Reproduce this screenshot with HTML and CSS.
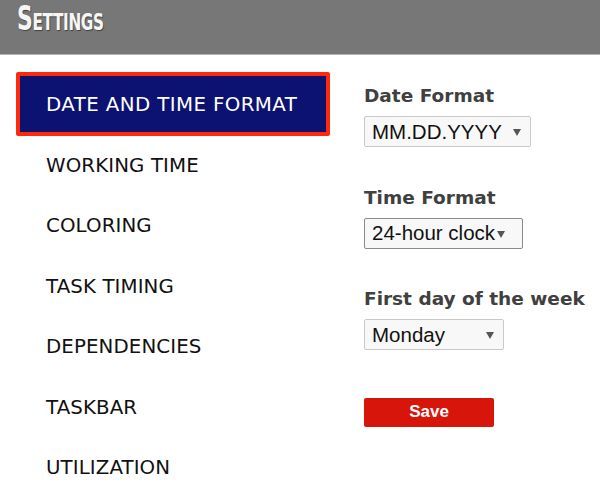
FILE: index.html
```html
<!DOCTYPE html>
<html lang="en">
<head>
<meta charset="utf-8">
<title>Settings</title>
<link rel="stylesheet" href="styles.css">
</head>
<body>
<header class="topbar">
  <h1 class="title">Settings</h1>
</header>
<main class="layout">
  <nav class="sidebar">
    <ul class="menu">
      <li class="menu-item active">DATE AND TIME FORMAT</li>
      <li class="menu-item">WORKING TIME</li>
      <li class="menu-item">COLORING</li>
      <li class="menu-item">TASK TIMING</li>
      <li class="menu-item">DEPENDENCIES</li>
      <li class="menu-item">TASKBAR</li>
      <li class="menu-item">UTILIZATION</li>
    </ul>
  </nav>
  <section class="panel">
    <div class="field">
      <div class="label">Date Format</div>
      <div class="select select-date"><span class="value">MM.DD.YYYY</span><span class="arrow"></span></div>
    </div>
    <div class="field">
      <div class="label">Time Format</div>
      <div class="select select-time focused"><span class="value">24-hour clock</span><span class="arrow"></span></div>
    </div>
    <div class="field">
      <div class="label">First day of the week</div>
      <div class="select select-day"><span class="value">Monday</span><span class="arrow"></span></div>
    </div>
    <button class="save" type="button">Save</button>
  </section>
</main>
</body>
</html>
```
FILE: styles.css
```css
html, body {
  margin: 0;
  padding: 0;
  background: #ffffff;
}

body {
  font-family: "DejaVu Sans", "Liberation Sans", sans-serif;
  color: #111;
}

.topbar {
  height: 55px;
  box-sizing: border-box;
  background: #777777;
  border-bottom: 1px solid #b5b5b5;
  padding: 2px 0 0 17px;
}

.title {
  margin: 0;
  font-family: "DejaVu Sans Condensed", "DejaVu Sans", sans-serif;
  font-stretch: condensed;
  font-weight: bold;
  font-variant: small-caps;
  font-size: 33px;
  line-height: 1;
  color: #f6f6f6;
  text-shadow: 1px 1px 1px rgba(0, 0, 0, 0.45);
  letter-spacing: -0.5px;
  transform: scaleX(0.74);
  transform-origin: left center;
}

.layout {
  display: flex;
}

.sidebar {
  width: 364px;
  flex: none;
  padding-top: 17px;
  padding-left: 16px;
  box-sizing: border-box;
}

.menu {
  list-style: none;
  margin: 0;
  padding: 0;
}

.menu-item {
  height: 60.5px;
  box-sizing: border-box;
  border: 4px solid transparent;
  padding-left: 26px;
  display: flex;
  align-items: center;
  font-size: 19.8px;
  letter-spacing: 0.1px;
  color: #111;
  white-space: nowrap;
}

.menu-item.active {
  width: 314px;
  height: 64px;
  margin-bottom: -1px;
  background: #0c1271;
  border-color: #ff2a0c;
  border-radius: 2px;
  color: #ffffff;
  letter-spacing: 0.4px;
}

.panel {
  padding-top: 28px;
  display: flex;
  flex-direction: column;
  align-items: flex-start;
}

.field {
  margin-bottom: 37.5px;
}

.label {
  font-weight: bold;
  font-size: 18.5px;
  line-height: 26px;
  color: #404040;
  margin-bottom: 7px;
  white-space: nowrap;
}

.select {
  height: 31px;
  box-sizing: border-box;
  border: 1px solid #c9c9c9;
  border-radius: 2px;
  background: #f8f8f8;
  display: flex;
  align-items: center;
  justify-content: space-between;
  padding: 0 9px 0 7px;
  font-family: "Liberation Sans", Arial, sans-serif;
  font-size: 20.5px;
  color: #111;
  white-space: nowrap;
}

.select.focused {
  border-color: #8a8a8a;
  padding-right: 6px;
  justify-content: flex-start;
}

.select-date { width: 167px; }
.select-time { width: 159px; }
.select-day { width: 140px; }

.arrow {
  width: 0;
  height: 0;
  border-left: 4.5px solid transparent;
  border-right: 4.5px solid transparent;
  border-top: 7px solid #555;
  margin-left: 2px;
  margin-top: 2px;
}

.save {
  margin-top: 10px;
  width: 130px;
  height: 29px;
  border: none;
  border-radius: 2px;
  background: #d7150b;
  color: #ffffff;
  font-family: "Liberation Sans", Arial, sans-serif;
  font-weight: bold;
  font-size: 17px;
  padding: 0;
  cursor: pointer;
}
```
